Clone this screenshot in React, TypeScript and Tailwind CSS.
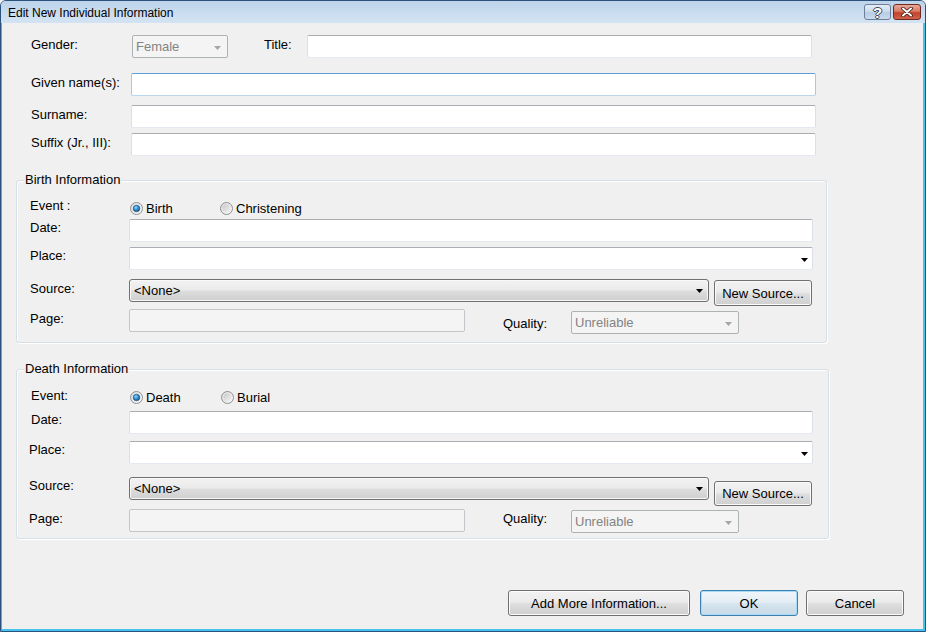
import React from "react";

const F = "font-['Liberation_Sans',Arial,sans-serif]";

function Label({ children, className = "" }: { children: React.ReactNode; className?: string }) {
  return (
    <div className={`h-[15px] leading-[17px] text-[13px] text-black whitespace-nowrap shrink-0 ${className}`}>
      {children}
    </div>
  );
}

function Triangle({ color = "#000000" }: { color?: string }) {
  return (
    <svg width="7" height="4" viewBox="0 0 7 4" className="shrink-0">
      <path d="M0 0 H7 L3.5 4 Z" fill={color} />
    </svg>
  );
}

function TextBox({ className = "", focused = false, arrow = false }: { className?: string; focused?: boolean; arrow?: boolean }) {
  return (
    <div
      className={`h-[23px] shrink-0 bg-white border rounded-[2px] flex items-center justify-end pr-[4px] ${
        focused
          ? "border-t-[#5e9ed6] border-x-[#a6c9e8] border-b-[#b9d6ef]"
          : "border-t-[#abadb3] border-x-[#dbdfe6] border-b-[#e3e9ef]"
      } ${className}`}
    >
      {arrow && (
        <div className="mt-[2px]">
          <Triangle />
        </div>
      )}
    </div>
  );
}

function DisabledBox({ className = "" }: { className?: string }) {
  return <div className={`h-[23px] shrink-0 bg-[#f4f4f4] border border-[#c3c6ca] rounded-[2px] ${className}`} />;
}

function DisabledSelect({ text, className = "" }: { text: string; className?: string }) {
  return (
    <div
      className={`h-[23px] shrink-0 bg-[#f4f4f4] border border-[#adb2b5] rounded-[2px] flex items-center pl-[3px] pr-[6px] text-[13px] text-[#838383] ${className}`}
    >
      <span className="flex-1 leading-[17px]">{text}</span>
      <div className="mt-[2px]">
        <Triangle color="#a6a6a6" />
      </div>
    </div>
  );
}

function SourceSelect() {
  return (
    <div className="h-[23px] w-[580px] shrink-0 rounded-[3px] border border-[#707070] bg-[linear-gradient(#f2f2f2_0%,#ebebeb_45%,#dddddd_55%,#cfcfcf_100%)] shadow-[inset_0_0_0_1px_#f8f8f8] flex items-center pl-[4px] pr-[5px] text-[13px] text-black">
      <span className="flex-1 leading-[17px]">&lt;None&gt;</span>
      <Triangle />
    </div>
  );
}

function Button({ children, className = "", def = false }: { children: React.ReactNode; className?: string; def?: boolean }) {
  return (
    <div
      className={`shrink-0 rounded-[3px] border flex items-center justify-center text-[13px] text-black leading-[17px] ${
        def
          ? "border-[#3c7fb1] bg-[linear-gradient(#f0f6fa_0%,#e4eef5_45%,#d5e4ee_55%,#c8dbe8_100%)] shadow-[inset_0_0_0_1px_#a9dcf4]"
          : "border-[#707070] bg-[linear-gradient(#f2f2f2_0%,#ebebeb_45%,#dddddd_55%,#cfcfcf_100%)] shadow-[inset_0_0_0_1px_#fbfbfb]"
      } ${className}`}
    >
      {children}
    </div>
  );
}

function Radio({ checked, id }: { checked: boolean; id: string }) {
  return (
    <svg width="13" height="13" viewBox="0 0 13 13" className="shrink-0">
      <defs>
        <linearGradient id={`o${id}`} x1="0" y1="0" x2="1" y2="1">
          <stop offset="0" stopColor="#dcdcdc" />
          <stop offset="1" stopColor="#fafafa" />
        </linearGradient>
        <linearGradient id={`i${id}`} x1="0" y1="0" x2="1" y2="1">
          <stop offset="0" stopColor="#c9c9c9" />
          <stop offset="1" stopColor="#f3f3f3" />
        </linearGradient>
        <radialGradient id={`d${id}`} cx="0.4" cy="0.35" r="0.7">
          <stop offset="0" stopColor="#8fd6ff" />
          <stop offset="0.5" stopColor="#2f8fd4" />
          <stop offset="1" stopColor="#174d7c" />
        </radialGradient>
      </defs>
      <circle cx="6.5" cy="6.5" r="6" fill={`url(#o${id})`} stroke="#8e8f8f" strokeWidth="1" />
      {checked ? (
        <circle cx="6.5" cy="6.5" r="3.3" fill={`url(#d${id})`} stroke="#1e4c74" strokeWidth="0.6" />
      ) : (
        <circle cx="6.5" cy="6.5" r="4" fill={`url(#i${id})`} />
      )}
    </svg>
  );
}

function RadioItem({ checked, label, id, className = "" }: { checked: boolean; label: string; id: string; className?: string }) {
  return (
    <div className={`flex items-center h-[15px] shrink-0 ${className}`}>
      <Radio checked={checked} id={id} />
      <span className="ml-[3px] text-[13px] leading-[17px] text-black">{label}</span>
    </div>
  );
}

function GroupBox({ title, className = "", children }: { title: string; className?: string; children: React.ReactNode }) {
  return (
    <div className={`shrink-0 flex flex-col border border-[#d5dfe5] rounded-[3px] shadow-[inset_1px_1px_0_#ffffff,1px_1px_0_#ffffff] ${className}`}>
      <div className="self-start -mt-[9px] ml-[7px] px-[1px] bg-[#f0f0f0] h-[15px] leading-[16px] text-[13px] text-black">
        {title}
      </div>
      {children}
    </div>
  );
}

export default function App() {
  return (
    <div className={`w-[926px] h-[632px] overflow-hidden bg-[#f0f0f0] ${F}`}>
      <div className="w-[926px] h-[632px] flex flex-col border border-[#2b527c] rounded-t-[6px] overflow-hidden">
        {/* Title bar */}
        <div className="h-[22px] shrink-0 flex items-start bg-[linear-gradient(to_bottom,#bcd3ea_0%,#c9dcef_50%,#d3e3f3_100%)]">
          <div className="pl-[7px] pt-[5px] text-[12px] leading-[14px] text-black">Edit New Individual Information</div>
          <div className="ml-auto flex pt-[3px] pr-[4px] gap-[2px]">
            <div className="w-[27px] h-[16px] rounded-[3px] border border-[#6d7f96] bg-[linear-gradient(#e3edf7_0%,#cddcec_45%,#b8cde3_55%,#c9dbee_100%)] flex items-center justify-center">
              <span className="text-[15px] leading-[15px] font-bold text-white [text-shadow:1px_0_0_#3a4656,-1px_0_0_#3a4656,0_1px_0_#3a4656,0_-1px_0_#3a4656]">?</span>
            </div>
            <div className="w-[28px] h-[16px] rounded-[3px] border border-[#6f2b1f] bg-[linear-gradient(#e9a99a_0%,#d97a64_45%,#c4432c_55%,#d1624a_100%)] flex items-center justify-center">
              <svg width="12" height="10" viewBox="0 0 12 10">
                <path d="M2 1.5 L10 8.5 M10 1.5 L2 8.5" stroke="#3b1a14" strokeWidth="3.6" strokeLinecap="round" />
                <path d="M2 1.5 L10 8.5 M10 1.5 L2 8.5" stroke="#ffffff" strokeWidth="2" strokeLinecap="round" />
              </svg>
            </div>
          </div>
        </div>

        {/* Client area */}
        <div className="flex-1 flex flex-col border-l border-r-2 border-b-2 border-l-[#5aa9dc] border-r-[#45c3ee] border-b-[#45c3ee] bg-[#f0f0f0]">
          {/* Gender / Title */}
          <div className="flex items-start mt-[12px] h-[23px]">
            <Label className="ml-[29px] w-[101px] mt-[1px]">Gender:</Label>
            <DisabledSelect text="Female" className="w-[96px]" />
            <Label className="ml-[36px] w-[43px] mt-[1px]">Title:</Label>
            <TextBox className="w-[505px]" />
          </div>
          {/* Given */}
          <div className="flex items-start mt-[15px] h-[23px]">
            <Label className="ml-[29px] w-[100px] mt-[1px]">Given name(s):</Label>
            <TextBox className="w-[685px]" focused />
          </div>
          <div className="flex items-start mt-[9px] h-[23px]">
            <Label className="ml-[29px] w-[100px] mt-[1px]">Surname:</Label>
            <TextBox className="w-[685px]" />
          </div>
          <div className="flex items-start mt-[5px] h-[23px]">
            <Label className="ml-[29px] w-[100px] mt-[1px]">Suffix (Jr., III):</Label>
            <TextBox className="w-[685px]" />
          </div>

          {/* Birth */}
          <GroupBox title="Birth Information" className="mt-[24px] ml-[14px] w-[811px] h-[163px]">
            <div className="flex items-start mt-[10px] h-[22px]">
              <Label className="ml-[13px] w-[100px]">Event :</Label>
              <div className="flex mt-[4px]">
                <RadioItem checked id="b1" label="Birth" className="w-[90px]" />
                <RadioItem checked={false} id="b2" label="Christening" />
              </div>
            </div>
            <div className="flex items-start h-[23px]">
              <Label className="ml-[13px] w-[99px]">Date:</Label>
              <TextBox className="w-[684px]" />
            </div>
            <div className="flex items-start mt-[5px] h-[23px]">
              <Label className="ml-[13px] w-[99px]">Place:</Label>
              <TextBox className="w-[684px]" arrow />
            </div>
            <div className="flex items-start mt-[9px] h-[23px]">
              <Label className="ml-[13px] w-[99px] mt-[1px]">Source:</Label>
              <SourceSelect />
              <Button className="ml-[5px] mt-[1px] w-[98px] h-[26px]">New Source...</Button>
            </div>
            <div className="flex items-start mt-[7px] h-[23px]">
              <Label className="ml-[13px] w-[99px] mt-[1px]">Page:</Label>
              <DisabledBox className="w-[336px]" />
              <Label className="ml-[38px] w-[68px] mt-[6px]">Quality:</Label>
              <DisabledSelect text="Unreliable" className="w-[168px] mt-[2px]" />
            </div>
          </GroupBox>

          {/* Death */}
          <GroupBox title="Death Information" className="mt-[26px] ml-[14px] w-[813px] h-[170px]">
            <div className="flex items-start mt-[11px] h-[24px]">
              <Label className="ml-[14px] w-[99px]">Event:</Label>
              <div className="flex mt-[3px]">
                <RadioItem checked id="d1" label="Death" className="w-[91px]" />
                <RadioItem checked={false} id="d2" label="Burial" />
              </div>
            </div>
            <div className="flex items-start h-[23px]">
              <Label className="ml-[14px] w-[98px]">Date:</Label>
              <TextBox className="w-[684px]" />
            </div>
            <div className="flex items-start mt-[7px] h-[23px]">
              <Label className="ml-[12px] w-[100px]">Place:</Label>
              <TextBox className="w-[684px]" arrow />
            </div>
            <div className="flex items-start mt-[13px] h-[23px]">
              <Label className="ml-[12px] w-[100px]">Source:</Label>
              <SourceSelect />
              <Button className="ml-[5px] mt-[4px] w-[98px] h-[25px]">New Source...</Button>
            </div>
            <div className="flex items-start mt-[9px] h-[23px]">
              <Label className="ml-[12px] w-[100px] mt-[1px]">Page:</Label>
              <DisabledBox className="w-[336px]" />
              <Label className="ml-[38px] w-[68px] mt-[1px]">Quality:</Label>
              <DisabledSelect text="Unreliable" className="w-[168px] mt-[1px] h-[22px]" />
            </div>
          </GroupBox>

          {/* Buttons */}
          <div className="flex items-start mt-[51px] h-[26px]">
            <Button className="ml-[506px] w-[182px] h-[26px]">Add More Information...</Button>
            <Button def className="ml-[10px] w-[98px] h-[26px]">OK</Button>
            <Button className="ml-[8px] w-[98px] h-[26px]">Cancel</Button>
          </div>
        </div>
      </div>
    </div>
  );
}
